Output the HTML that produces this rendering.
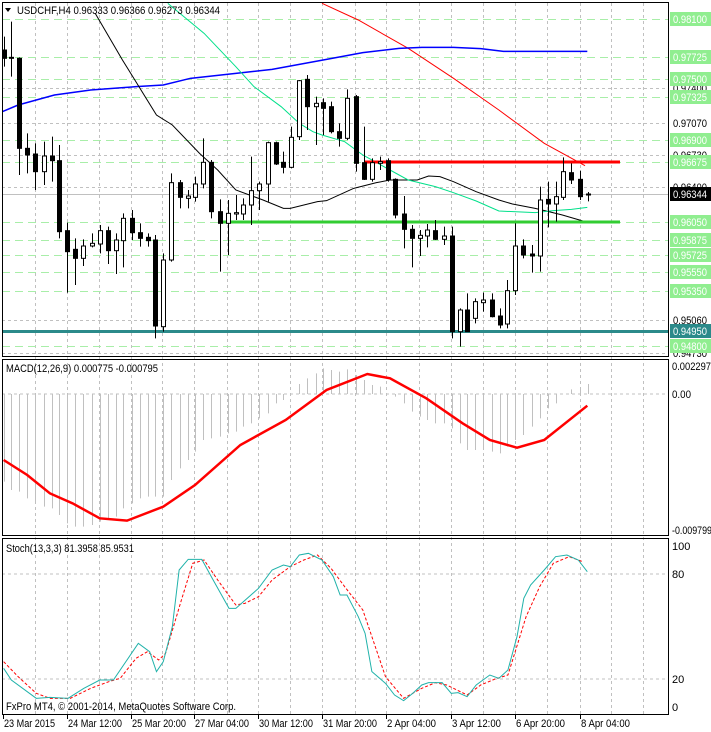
<!DOCTYPE html>
<html><head><meta charset="utf-8"><style>
html,body{margin:0;padding:0;background:#fff;width:711px;height:732px;overflow:hidden}
svg{display:block;font-family:"Liberation Sans",sans-serif}
</style></head><body>
<svg id="s" width="711" height="732" xmlns="http://www.w3.org/2000/svg"></svg>
<script>
const S=document.getElementById('s');const NS='http://www.w3.org/2000/svg';
function el(t,a,txt){const e=document.createElementNS(NS,t);for(const k in a)e.setAttribute(k,a[k]);if(txt!==undefined)e.textContent=txt;S.appendChild(e);return e;}
function tx(x,y,t,len,fill){const a={x:x,y:y,'font-size':11,fill:fill||'#000'};if(len){a.textLength=len;a.lengthAdjust='spacingAndGlyphs';}return el('text',a,t);}
const X=z=>z/2.205, Y=z=>z/3, Y2=z=>360+z/3;
const R=669;
const vx=[35,67,99,131,162,194,227,258,290,322,355,386,419,451,483,515,547,580,611,643];
for(const x of vx){el('line',{x1:x+.5,y1:3,x2:x+.5,y2:715,stroke:'#c0c0c0','stroke-dasharray':'3,3'});}
const gl=[[19,1],[57,1],[79,1],[88,0],[97,1],[123,0],[140,1],[155,0],[162,1],[187,0],[222,1],[240,1],[255,1],[272,1],[291,1],[320,0],[346,1],[353,0]];
for(const [y,g] of gl){el('line',{x1:2,y1:y+.5,x2:R,y2:y+.5,stroke:g?'#a8eea8':'#c0c0c0','stroke-dasharray':g?'8,5':'3,3','stroke-width':1});}
el('line',{x1:2,y1:194.5,x2:R,y2:194.5,stroke:'#c0c0c0'});
function pl(pts,st,w,fy,dash){el('polyline',{points:pts.map(p=>X(p[0])+','+fy(p[1])).join(' '),fill:'none',stroke:st,'stroke-width':w,'stroke-dasharray':dash||'none'});}
pl([[710,10],[790,60],[900,145],[1000,235],[1100,330],[1200,430],[1290,497]],'#ff0000',1,Y);
pl([[5,335],[40,315],[120,285],[200,270],[300,260],[360,255],[420,235],[520,220],[600,208],[720,178],[800,158],[880,145],[930,142],[1000,142],[1060,146],[1110,154],[1295,154]],'#0000ff',1.5,Y);
pl([[210,40],[270,180],[345,345],[380,375],[440,460],[480,510],[520,570],[580,600],[625,625],[640,625],[700,605],[720,602],[780,565],[830,548],[860,540],[920,540],[945,528],[970,530],[1000,545],[1050,575],[1100,600],[1130,612],[1180,625],[1210,635],[1240,645],[1290,665]],'#000',1,Y);
pl([[370,10],[450,100],[520,200],[560,260],[620,320],[660,370],[690,395],[710,405],[760,425],[800,465],[860,510],[900,540],[960,560],[1000,578],[1050,603],[1100,633],[1180,638],[1220,632],[1260,628],[1295,622]],'#00e08a',1,Y);
el('rect',{x:364,y:160.5,width:256,height:3,fill:'#ff0000'});
el('rect',{x:218,y:220.5,width:402,height:3,fill:'#32cd32'});
el('rect',{x:2,y:330,width:667,height:3,fill:'#2b8a8a'});
const C=[[8,150,175,110,200,1],[24,172,175,65,230,1],[42,175,445,172,525,1],[60,445,465,400,520,1],[78,462,515,430,570,1],[96,468,515,425,555,0],[114,468,482,410,545,1],[130,482,695,435,715,1],[148,692,755,668,878,1],[166,748,775,715,855,1],[184,738,775,718,798,0],[202,730,738,700,742,0],[220,692,732,675,760,0],[238,692,752,680,792,1],[256,720,752,700,822,0],[272,655,722,640,802,0],[290,655,698,630,720,1],[308,698,715,670,740,1],[326,712,722,700,740,1],[342,720,978,705,1015,1],[360,780,980,760,995,0],[378,548,780,520,785,0],[396,548,592,540,625,1],[414,588,595,570,625,0],[430,552,592,530,605,0],[448,487,552,415,565,0],[466,487,635,480,655,1],[484,635,670,598,815,1],[502,640,670,600,765,0],[520,638,642,585,660,0],[536,615,642,595,660,0],[554,572,615,470,675,0],[572,552,572,545,630,0],[590,428,552,425,605,0],[608,428,492,425,495,1],[624,487,502,455,520,1],[642,412,502,380,505,0],[660,242,410,240,420,0],[678,238,320,225,390,1],[696,310,320,290,435,0],[712,308,325,295,405,1],[730,320,395,305,400,1],[748,395,415,370,440,1],[766,295,415,268,420,0],[784,290,490,285,515,1],[802,488,538,380,540,1],[820,488,538,475,545,0],[838,485,490,470,510,0],[856,482,540,475,545,1],[872,538,645,535,655,1],[890,642,688,588,745,1],[908,688,715,675,802,1],[926,706,715,690,768,0],[942,690,708,672,742,0],[960,692,718,660,720,1],[978,708,718,680,735,0],[996,708,995,680,1015,1],[1014,930,995,925,1040,0],[1030,930,995,880,995,1],[1048,905,955,895,970,0],[1066,900,908,878,935,0],[1084,900,950,880,952,1],[1102,948,975,925,985,1],[1118,872,972,840,985,0],[1136,738,872,670,885,0],[1154,738,765,718,775,1],[1172,762,768,735,818,1],[1190,600,768,560,815,0],[1208,598,612,545,682,1],[1226,590,612,545,665,0],[1242,515,592,472,600,0],[1260,518,540,490,552,1],[1278,538,590,512,600,1],[1296,582,584,576,604,1]];
for(const c of C){const x=Math.round(X(c[0]));el('line',{x1:x+.5,y1:Y(c[3]),x2:x+.5,y2:Y(c[4]),stroke:'#000'});
 const t=Y(c[1]),b=Y(c[2]);const h=Math.max(1,b-t);
 el('rect',{x:x-1.5,y:t,width:4,height:h,fill:c[5]?'#000':'#fff',stroke:'#000','stroke-width':1});}
const lb=[[19,'0.98100',1],[57,'0.97725',1],[79,'0.97500',1],[88,'0.97400',0],[97,'0.97325',1],[123,'0.97070',0],[140,'0.96900',1],[155,'0.96730',0],[162,'0.96675',1],[187,'0.96400',0],[222,'0.96050',1],[240,'0.95875',1],[255,'0.95725',1],[272,'0.95550',1],[288,'0.95390',0],[291,'0.95350',1],[320,'0.95060',0],[331,'0.94950',3],[353,'0.94730',0],[346,'0.94800',1]];
for(const [y,t,g] of lb){ if(g===0) tx(673,y+4,t,34);}
for(const [y,t,g] of lb){ if(g===1){el('rect',{x:670,y:y-7,width:41,height:14,fill:'#90ee90'});tx(673,y+4,t,34,'#fff');}
 if(g===3){el('rect',{x:670,y:y-7,width:41,height:14,fill:'#2b8a8a'});tx(673,y+4,t,34,'#fff');}}
el('rect',{x:670,y:187,width:41,height:14,fill:'#000'});tx(673,198,'0.96344',34,'#fff');
el('path',{d:'M5 8 L11 8 L8 12 Z',fill:'#000'});
tx(17,14,'USDCHF,H4  0.96333 0.96366 0.96273 0.96344',203);
el('line',{x1:2,y1:394,x2:R,y2:394,stroke:'#c0c0c0','stroke-dasharray':'3,3'});
const H=[365,390,395,415,430,440,445,465,490,500,500,495,485,475,470,445,430,415,410,410,410,360,325,300,275,240,235,230,220,215,200,190,175,160,130,120,102,72,55,40,25,30,35,28,45,60,75,80,102,110,130,155,170,180,190,190,205,250,270,270,265,275,280,260,240,225,200,175,145,130,102,88,85,72];
for(let i=0;i<H.length;i++){const x=Math.round(X(C[i][0]))+.5;el('line',{x1:x,y1:394,x2:x,y2:Y2(H[i]),stroke:'#c0c0c0'});}
pl([[8,300],[60,345],[110,400],[160,430],[220,475],[280,482],[360,440],[430,375],[530,255],[630,180],[720,90],[810,42],[860,55],[940,115],[1020,190],[1080,240],[1140,263],[1200,240],[1260,175],[1295,137]],'#ff0000',2.5,Y2);
tx(6,372,'MACD(12,26,9) 0.000775 -0.000795',152);
tx(672,370,'0.002297',39);
tx(672,398,'0.00',19);
tx(672,534,'-0.009799',40);
el('line',{x1:2,y1:574,x2:R,y2:574,stroke:'#c0c0c0','stroke-dasharray':'3,3'});
el('line',{x1:2,y1:679,x2:R,y2:679,stroke:'#c0c0c0','stroke-dasharray':'3,3'});
pl([[8,905],[40,950],[80,1000],[110,1015],[155,1015],[200,985],[240,965],[265,955],[300,895],[325,875],[350,900],[365,880],[400,720],[425,610],[450,600],[480,660],[520,735],[540,730],[570,710],[600,660],[640,620],[670,600],[700,585],[730,625],[760,680],[800,750],[820,830],[850,950],[890,1015],[930,985],[960,968],[985,975],[1030,1005],[1060,975],[1090,958],[1120,945],[1160,770],[1190,680],[1220,610],[1255,590],[1285,605]],'#ff0000',1,Y2,'3,2');
pl([[8,925],[25,960],[80,1015],[110,1012],[150,1015],[185,985],[220,960],[250,960],[290,880],[305,850],[330,875],[345,935],[360,905],[380,800],[395,630],[415,598],[445,598],[470,660],[505,745],[520,745],[570,685],[600,630],[625,615],[640,620],[660,585],[680,580],[710,600],[735,650],[750,705],[765,705],[790,770],[805,820],[820,935],[850,970],[870,1005],[890,1022],[910,1000],[930,975],[945,968],[975,968],[995,1000],[1010,998],[1030,1010],[1050,975],[1080,945],[1100,955],[1120,930],[1140,830],[1155,715],[1170,675],[1200,630],[1225,590],[1250,585],[1275,600],[1295,635]],'#20b2aa',1,Y2);
tx(6,552,'Stoch(13,3,3) 81.3958 85.9531',128);
tx(6,710,'FxPro MT4, © 2001-2014, MetaQuotes Software Corp.',230);
for(const [y,t] of [[550,'100'],[578,'80'],[683,'20'],[711,'0']]) tx(672,y,t);
el('rect',{x:2.5,y:2.5,width:666,height:354,fill:'none',stroke:'#000'});
el('rect',{x:2.5,y:359.5,width:666,height:176,fill:'none',stroke:'#000'});
el('rect',{x:2.5,y:538.5,width:666,height:176,fill:'none',stroke:'#000'});
const tl=[[3,'23 Mar 2015',51],[67,'24 Mar 12:00',54],[131,'25 Mar 20:00',54],[194,'27 Mar 04:00',54],[258,'30 Mar 12:00',54],[322,'31 Mar 20:00',54],[386,'2 Apr 04:00',49],[451,'3 Apr 12:00',49],[515,'6 Apr 20:00',49],[580,'8 Apr 04:00',49]];
for(const [x,t,l] of tl){el('line',{x1:x+.5,y1:715,x2:x+.5,y2:719,stroke:'#000'});tx(x+1,727,t,l);}
</script>
</body></html>
